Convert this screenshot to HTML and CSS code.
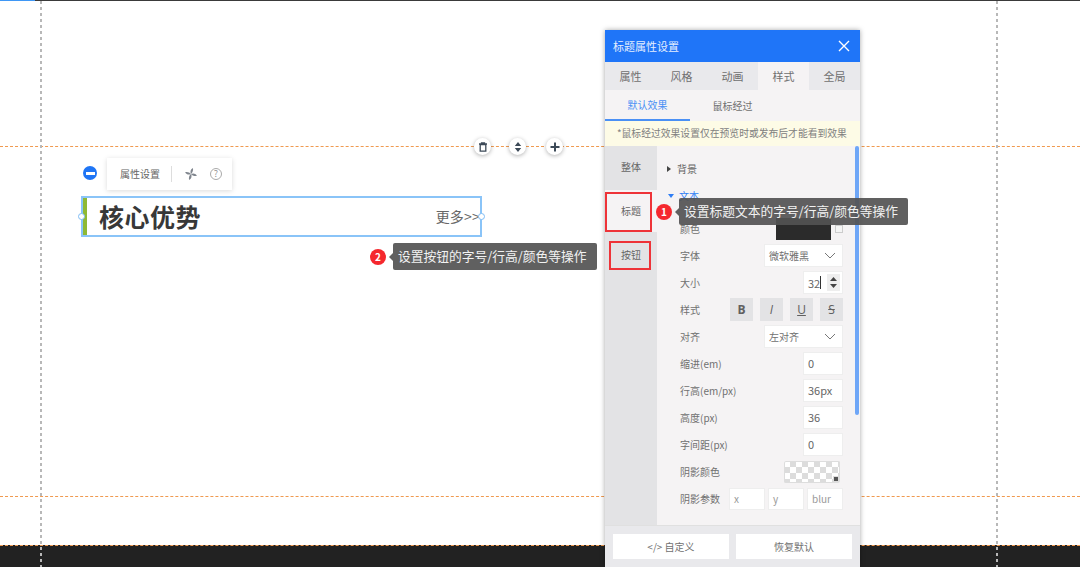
FILE: index.html
```html
<!DOCTYPE html>
<html lang="zh-CN">
<head>
    <meta charset="UTF-8">
    <title>标题属性设置</title>
    <link rel="stylesheet" href="styles.css">
</head>
<body>
    <div class="stage">
        <div class="canvas">
            <div class="top-line"></div>
            <div class="guide-v guide-left"></div>
            <div class="guide-v guide-right"></div>
            <div class="guide-h guide-1"></div>
            <div class="guide-h guide-2"></div>
            <div class="guide-h guide-3"></div>

            <div class="round-btn btn-del">
                <svg width="10" height="10" viewBox="0 0 10 10"><path d="M1 2h8M3.500 2V1h3v1M2.200 2.500h5.600v6.700H2.200z" fill="none" stroke="#3d4a58" stroke-width="1.300"/></svg>
            </div>
            <div class="round-btn btn-move">
                <svg width="10" height="12" viewBox="0 0 10 12"><path d="M5 1l3.200 4H1.800zM5 11L1.800 7h6.400z" fill="#3d4a58"/></svg>
            </div>
            <div class="round-btn btn-add">
                <svg width="10" height="10" viewBox="0 0 10 10"><path d="M5 .5v9M.5 5h9" stroke="#3d4a58" stroke-width="2"/></svg>
            </div>

            <div class="minus-btn"><span></span></div>
            <div class="widget-bar">
                <span class="widget-bar-label">属性设置</span>
                <span class="widget-bar-sep"></span>
                <svg class="icon-fan" width="14" height="14" viewBox="0 0 14 14" fill="#80868e">
                    <path d="M7 7C5.900 5 6.300 2.400 8.800 1.100 9.500 3 8.900 5.500 7 7z"/>
                    <path d="M7 7C5.900 5 6.300 2.400 8.800 1.100 9.500 3 8.900 5.500 7 7z" transform="rotate(90 7 7)"/>
                    <path d="M7 7C5.900 5 6.300 2.400 8.800 1.100 9.500 3 8.900 5.500 7 7z" transform="rotate(180 7 7)"/>
                    <path d="M7 7C5.900 5 6.300 2.400 8.800 1.100 9.500 3 8.900 5.500 7 7z" transform="rotate(270 7 7)"/>
                </svg>
                <span class="icon-help">?</span>
            </div>

            <div class="title-widget">
                <span class="title-text">核心优势</span>
                <span class="title-more">更多&gt;&gt;</span>
                <i class="handle handle-l"></i>
                <i class="handle handle-r"></i>
            </div>

            <div class="panel">
                <div class="panel-head">
                    <span>标题属性设置</span>
                    <svg width="12" height="12" viewBox="0 0 12 12"><path d="M1 1l10 10M11 1L1 11" stroke="#fff" stroke-width="1.400"/></svg>
                </div>
                <div class="tabs">
                    <div class="tab">属性</div>
                    <div class="tab">风格</div>
                    <div class="tab">动画</div>
                    <div class="tab active">样式</div>
                    <div class="tab">全局</div>
                </div>
                <div class="subtabs">
                    <div class="subtab active">默认效果</div>
                    <div class="subtab">鼠标经过</div>
                </div>
                <div class="notice">*鼠标经过效果设置仅在预览时或发布后才能看到效果</div>
                <div class="panel-body">
                    <div class="side">
                        <div class="side-item">整体</div>
                        <div class="side-item current">标题</div>
                        <div class="side-item">按钮</div>
                    </div>
                    <div class="form">
                        <div class="group"><i class="arrow-right"></i>背景</div>
                        <div class="group group-open"><i class="arrow-down"></i>文本</div>
                        <div class="row row-color">
                            <label>颜色</label>
                            <div class="color-wrap"><span class="swatch"></span><span class="check"></span></div>
                        </div>
                        <div class="row">
                            <label>字体</label>
                            <div class="select">微软雅黑<svg width="12" height="7" viewBox="0 0 12 7"><path d="M1 1l5 5 5-5" fill="none" stroke="#777"/></svg></div>
                        </div>
                        <div class="row">
                            <label>大小</label>
                            <div class="input input-num">32<span class="caret"></span>
                                <span class="spin"><svg width="7" height="11" viewBox="0 0 7 11"><path d="M3.500 0L7 4H0zM3.500 11L0 7h7z" fill="#444"/></svg></span>
                            </div>
                        </div>
                        <div class="row">
                            <label>样式</label>
                            <div class="style-btns">
                                <span class="style-btn bold">B</span>
                                <span class="style-btn italic">I</span>
                                <span class="style-btn under">U</span>
                                <span class="style-btn strike">S</span>
                            </div>
                        </div>
                        <div class="row">
                            <label>对齐</label>
                            <div class="select">左对齐<svg width="12" height="7" viewBox="0 0 12 7"><path d="M1 1l5 5 5-5" fill="none" stroke="#777"/></svg></div>
                        </div>
                        <div class="row"><label>缩进(em)</label><div class="input">0</div></div>
                        <div class="row"><label>行高(em/px)</label><div class="input">36px</div></div>
                        <div class="row"><label>高度(px)</label><div class="input">36</div></div>
                        <div class="row"><label>字间距(px)</label><div class="input">0</div></div>
                        <div class="row">
                            <label>阴影颜色</label>
                            <div class="alpha"><span class="alpha-dot"></span></div>
                        </div>
                        <div class="row">
                            <label>阴影参数</label>
                            <div class="shadow-inputs">
                                <span class="input-sm">x</span>
                                <span class="input-sm">y</span>
                                <span class="input-sm">blur</span>
                            </div>
                        </div>
                    </div>
                    <div class="scrollbar"></div>
                </div>
                <div class="panel-foot">
                    <div class="foot-btn">&lt;/&gt; 自定义</div>
                    <div class="foot-btn">恢复默认</div>
                </div>
            </div>

            <div class="mark mark-title"></div>
            <div class="mark mark-button"></div>

            <div class="hint hint-1">
                <span class="badge">1</span>
                <span class="hint-text">设置标题文本的字号/行高/颜色等操作</span>
            </div>
            <div class="hint hint-2">
                <span class="badge">2</span>
                <span class="hint-text">设置按钮的字号/行高/颜色等操作</span>
            </div>
        </div>
        <div class="dark-band"></div>
    </div>
</body>
</html>
```

FILE: styles.css
```css
* {
    box-sizing: border-box;
    font-family: "Noto Sans CJK SC", "Liberation Sans", sans-serif;
}

body {
    margin: 0;
    background-color: #fff;
}

.stage {
    width: 1080px;
    height: 567px;
    display: flex;
    flex-direction: column;
    overflow: hidden;
}

.canvas {
    position: relative;
    height: 545px;
}

.dark-band {
    flex: 1;
    background-color: #222;
}

.top-line {
    position: absolute;
    left: 0;
    top: 0;
    width: 100%;
    height: 1px;
    background: linear-gradient(to right, #3f97f5 35px, #3a3a3a 35px);
}

.guide-v {
    position: absolute;
    top: 1px;
    width: 2px;
    height: 566px;
    background: repeating-linear-gradient(to bottom, #b8b8b8 0 3px, transparent 3px 6px);
    z-index: 1;
}

.guide-left { left: 40px; }
.guide-right { left: 996px; }

.guide-h {
    position: absolute;
    left: 0;
    width: 100%;
    border-top: 1px dashed #f09a50;
}

.guide-1 { top: 146px; }
.guide-2 { top: 496px; }
.guide-3 { top: 545px; }

.round-btn {
    position: absolute;
    top: 138px;
    width: 17px;
    height: 17px;
    border-radius: 50%;
    background-color: #fff;
    box-shadow: 0 1px 4px rgba(0, 0, 0, 0.3);
    display: flex;
    align-items: center;
    justify-content: center;
}

.btn-del { left: 474px; }
.btn-move { left: 509px; }
.btn-add { left: 546px; }

.minus-btn {
    position: absolute;
    left: 83px;
    top: 166px;
    width: 14px;
    height: 14px;
    border-radius: 50%;
    background-color: #1f75f5;
    display: flex;
    align-items: center;
    justify-content: center;
}

.minus-btn span {
    width: 9px;
    height: 3px;
    background-color: #fff;
}

.widget-bar {
    position: absolute;
    left: 107px;
    top: 158px;
    width: 125px;
    height: 32px;
    background-color: #fff;
    box-shadow: 0 1px 5px rgba(0, 0, 0, 0.15);
    display: flex;
    align-items: center;
    padding: 0 0 2px 13px;
    font-size: 10px;
    color: #666;
}

.widget-bar-sep {
    width: 1px;
    height: 16px;
    background-color: #ddd;
    margin: 2px 12px 0 11px;
}

.icon-fan {
    margin-top: 2px;
}

.icon-help {
    width: 12px;
    height: 12px;
    margin: 2px 0 0 12px;
    border: 1px solid #aaa;
    border-radius: 50%;
    font-size: 9px;
    line-height: 10px;
    text-align: center;
    color: #999;
}

.title-widget {
    position: absolute;
    left: 81px;
    top: 196px;
    width: 401px;
    height: 41px;
    border: 2px solid #8ac4f8;
    background: linear-gradient(to right, #8fb935 4px, transparent 4px);
    display: flex;
    align-items: center;
    justify-content: space-between;
    padding-left: 16px;
}

.title-text {
    font-size: 25px;
    font-weight: 700;
    letter-spacing: 0.5px;
    color: #383838;
    margin-top: -2px;
}

.title-more {
    font-size: 14px;
    color: #666;
    letter-spacing: 0.2px;
    margin-top: -2px;
}

.handle {
    position: absolute;
    top: 15px;
    width: 7px;
    height: 7px;
    border: 1px solid #80bdf5;
    border-radius: 50%;
    background-color: #fff;
}

.handle-l { left: -5px; }
.handle-r { right: -5px; }

.panel {
    position: absolute;
    left: 605px;
    top: 30px;
    width: 255px;
    height: 537px;
    z-index: 2;
    background-color: #f5f3f4;
    box-shadow: 0 0 5px rgba(0, 0, 0, 0.35);
    display: flex;
    flex-direction: column;
    font-size: 10px;
    color: #666;
}

.panel-head {
    height: 32px;
    flex: none;
    background-color: #1f75f8;
    color: #e4eeff;
    font-size: 11px;
    display: flex;
    align-items: center;
    justify-content: space-between;
    padding: 0 10px 0 8px;
}

.tabs {
    height: 28px;
    flex: none;
    display: flex;
    background-color: #e9e9ec;
}

.tab {
    flex: 1;
    display: flex;
    align-items: center;
    justify-content: center;
    font-size: 11px;
    color: #707070;
}

.tab.active {
    background-color: #f5f3f4;
}

.subtabs {
    height: 31px;
    flex: none;
    display: flex;
}

.subtab {
    width: 85px;
    display: flex;
    align-items: center;
    justify-content: center;
    font-size: 10px;
    color: #707070;
}

.subtab.active {
    color: #4a90f5;
    border-bottom: 2px solid #4a90f5;
}

.notice {
    height: 25px;
    flex: none;
    background-color: #fdfbe6;
    padding-left: 12px;
    line-height: 25px;
    color: #808080;
    font-size: 9.8px;
    white-space: nowrap;
}

.panel-body {
    flex: 1;
    display: flex;
    position: relative;
    min-height: 0;
}

.side {
    width: 52px;
    flex: none;
    background-color: #e3e3e5;
}

.side-item {
    height: 46px;
    display: flex;
    align-items: center;
    justify-content: center;
    padding-bottom: 2px;
    color: #666;
}

.side-item:first-child {
    height: 44px;
    padding-bottom: 3px;
}

.side-item.current {
    height: 42px;
    background-color: #f5f3f4;
}

.form {
    flex: 1;
    padding: 10px 17px 0 11px;
}

.group {
    height: 27px;
    display: flex;
    align-items: center;
    padding-bottom: 2px;
    color: #666;
}

.group-open {
    color: #2e7df5;
    margin-bottom: 5px;
}

.arrow-right {
    width: 0;
    height: 0;
    margin: 0 6px 0 -1px;
    border-left: 4px solid #444;
    border-top: 3px solid transparent;
    border-bottom: 3px solid transparent;
}

.arrow-down {
    width: 0;
    height: 0;
    margin: 0 5px 0 0;
    border-top: 4px solid #2e7df5;
    border-left: 3px solid transparent;
    border-right: 3px solid transparent;
}

.row {
    height: 27px;
    display: flex;
    align-items: center;
    justify-content: space-between;
    padding-left: 12px;
}

.row label {
    color: #707070;
    white-space: nowrap;
}

.color-wrap {
    display: flex;
    align-items: center;
    gap: 4px;
}

.swatch {
    width: 55px;
    height: 22px;
    background-color: #2b2b2b;
}

.check {
    width: 8px;
    height: 8px;
    border: 1px solid #ccc;
    background-color: #f5f5f5;
}

.select {
    width: 79px;
    height: 23px;
    background-color: #fff;
    border: 1px solid #eee;
    display: flex;
    align-items: center;
    justify-content: space-between;
    padding: 0 6px 0 4px;
    color: #707070;
}

.input {
    width: 40px;
    height: 23px;
    background-color: #fff;
    border: 1px solid #eee;
    padding-left: 4px;
    line-height: 20px;
    font-size: 11px;
    color: #666;
    position: relative;
}

.input-num {
    display: flex;
    align-items: center;
}

.caret {
    width: 1px;
    height: 13px;
    background-color: #333;
}

.spin {
    position: absolute;
    right: 2px;
    top: 2px;
    width: 13px;
    height: 17px;
    background-color: #eee;
    display: flex;
    align-items: center;
    justify-content: center;
}

.style-btns {
    display: flex;
    gap: 7px;
}

.style-btn {
    width: 23px;
    height: 23px;
    background-color: #e3e3e5;
    display: flex;
    align-items: center;
    justify-content: center;
    font-family: "Open Sans", sans-serif;
    font-size: 12px;
    color: #606060;
}

.bold { font-weight: 700; }
.italic { font-style: italic; }
.under { text-decoration: underline; }
.strike { text-decoration: line-through; }

.alpha {
    position: relative;
    width: 56px;
    height: 22px;
    margin-right: 3px;
    border-radius: 2px;
    background: repeating-conic-gradient(#dcdcdc 0 25%, #fff 0 50%) 0 0 / 12px 12px;
    box-shadow: 0 0 0 1px #ddd inset;
}

.alpha-dot {
    position: absolute;
    right: 1px;
    bottom: 1px;
    width: 6px;
    height: 6px;
    border: 1px solid #ddd;
    background-color: #555;
}

.shadow-inputs {
    display: flex;
    gap: 3px;
}

.input-sm {
    width: 36px;
    height: 22px;
    padding-left: 4px;
    background-color: #fff;
    border: 1px solid #eee;
    line-height: 19px;
    color: #999;
    font-size: 10px;
}

.scrollbar {
    position: absolute;
    left: 250px;
    top: 0;
    width: 4px;
    height: 269px;
    background-color: #6ea6f7;
    border-radius: 2px;
}

.panel-foot {
    height: 42px;
    flex: none;
    background-color: #e9e9ec;
    border-top: 1px solid #e0e0e0;
    display: flex;
    justify-content: space-between;
    padding: 8px 8px 0 8px;
}

.foot-btn {
    width: 116px;
    height: 25px;
    background-color: #fff;
    display: flex;
    align-items: center;
    justify-content: center;
    padding-bottom: 1px;
    color: #707070;
}

.mark {
    position: absolute;
    z-index: 3;
    border: 2px solid #ee3338;
}

.mark-title {
    left: 605px;
    top: 192px;
    width: 47px;
    height: 40px;
}

.mark-button {
    left: 609px;
    top: 241px;
    width: 42px;
    height: 29px;
}

.hint {
    position: absolute;
    z-index: 4;
    display: flex;
    align-items: center;
    gap: 7px;
}

.hint-1 { left: 656px; top: 198px; }
.hint-2 { left: 370px; top: 243px; }

.badge {
    width: 16px;
    height: 16px;
    border-radius: 50%;
    background-color: #f5282e;
    color: #fff;
    font-size: 10px;
    font-weight: 700;
    line-height: 16px;
    text-align: center;
}

.hint-text {
    position: relative;
    height: 27px;
    padding: 0 10px 0 5px;
    border-radius: 2px;
    background-color: rgba(82, 82, 82, 0.92);
    color: #f2f2f2;
    font-size: 12.75px;
    line-height: 26px;
    white-space: nowrap;
}

.hint-text::before {
    content: "";
    position: absolute;
    left: -4px;
    top: 10px;
    border-right: 4px solid rgba(82, 82, 82, 0.92);
    border-top: 4px solid transparent;
    border-bottom: 4px solid transparent;
}
```
